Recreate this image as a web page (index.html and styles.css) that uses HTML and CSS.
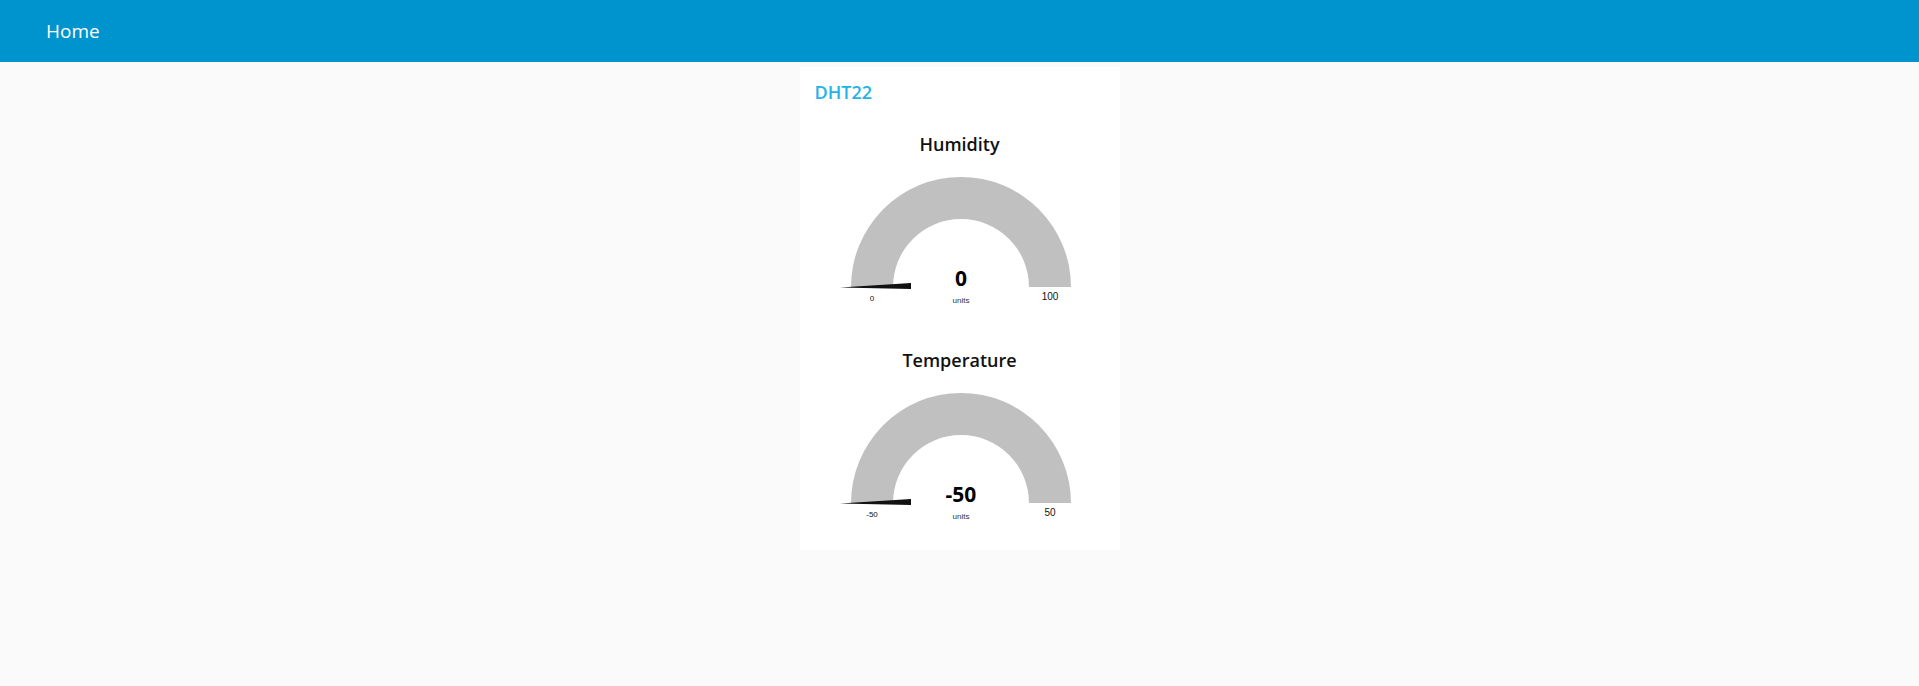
FILE: index.html
```html
<!DOCTYPE html>
<html>
<head>
<meta charset="utf-8">
<title>Home</title>
<link rel="stylesheet" href="styles.css">
</head>
<body>
<header class="toolbar"><span class="toolbar-title">Home</span></header>
<main class="content">
  <section class="group">
    <h2 class="group-title">DHT22</h2>
    <div class="widget">
      <div class="widget-title">Humidity</div>
      <svg class="gauge" width="320" height="160" viewBox="0 0 320 160">
        <path class="gauge-arc" d="M 51 119 A 110 110 0 0 1 271 119 L 229 119 A 68 68 0 0 0 93 119 Z"/>
        <polygon class="gauge-needle" points="40,119.5 111,115 111,121"/>
        <text class="gauge-value" x="161" y="118" text-anchor="middle">0</text>
        <text class="gauge-units" x="161" y="134.5" text-anchor="middle">units</text>
        <text class="gauge-min" x="72" y="133" text-anchor="middle">0</text>
        <text class="gauge-max" x="250" y="132" text-anchor="middle">100</text>
      </svg>
    </div>
    <div class="widget">
      <div class="widget-title">Temperature</div>
      <svg class="gauge" width="320" height="160" viewBox="0 0 320 160">
        <path class="gauge-arc" d="M 51 119 A 110 110 0 0 1 271 119 L 229 119 A 68 68 0 0 0 93 119 Z"/>
        <polygon class="gauge-needle" points="40,119.5 111,115 111,121"/>
        <text class="gauge-value" x="161" y="118" text-anchor="middle">-50</text>
        <text class="gauge-units" x="161" y="134.5" text-anchor="middle">units</text>
        <text class="gauge-min" x="72" y="133" text-anchor="middle">-50</text>
        <text class="gauge-max" x="250" y="132" text-anchor="middle">50</text>
      </svg>
    </div>
  </section>
</main>
</body>
</html>
```
FILE: styles.css
```css
html, body {
  margin: 0;
  padding: 0;
  background: #fafafa;
  font-family: "Open Sans", "Noto Sans", sans-serif;
  color: #111;
}
.toolbar {
  height: 62px;
  background: #0094ce;
  display: flex;
  align-items: center;
  padding-left: 46px;
}
.toolbar-title {
  color: #fff;
  font-size: 19px;
  font-weight: 500;
}
.content {
  display: flex;
  justify-content: center;
  padding-top: 5px;
}
.group {
  width: 320px;
  background: #fff;
  padding-bottom: 6px;
}
.group-title {
  margin: 0;
  height: 45px;
  box-sizing: border-box;
  padding: 14px 0 0 15px;
  font-size: 18px;
  line-height: 22px;
  font-weight: 600;
  color: #1fb3ea;
}
.widget {
  height: 216px;
  display: flex;
  flex-direction: column;
}
.widget-title {
  padding-top: 8px;
  height: 48px;
  line-height: 48px;
  text-align: center;
  font-size: 18px;
  font-weight: 600;
  color: #111;
}
.gauge {
  display: block;
}
.gauge-arc {
  fill: #c0c0c0;
}
.gauge-needle {
  fill: #111;
}
.gauge-value {
  font-family: "Open Sans", sans-serif;
  font-weight: 700;
  font-size: 21px;
  fill: #010101;
}
.gauge-units {
  font-family: "Liberation Sans", Arial, sans-serif;
  font-size: 8px;
  fill: #333;
}
.gauge-min {
  font-family: "Liberation Sans", Arial, sans-serif;
  font-size: 8px;
  fill: #111;
}
.gauge-max {
  font-family: "Liberation Sans", Arial, sans-serif;
  font-size: 10px;
  fill: #111;
}
```
